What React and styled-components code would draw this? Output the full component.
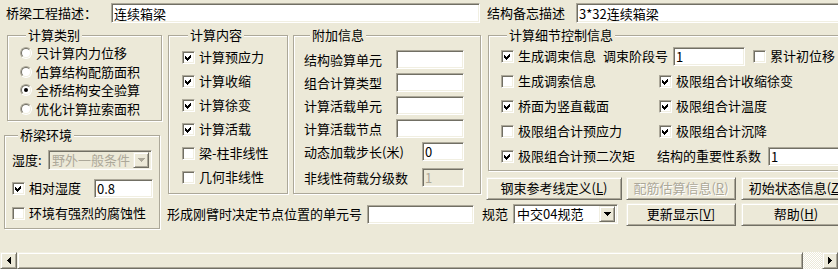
import React from 'react'
import styled, { createGlobalStyle, css } from 'styled-components'

const GlobalStyle = createGlobalStyle`
  html, body {
    margin: 0;
    padding: 0;
    background: #ece9d8;
  }
`

const sunken = css`
  box-sizing: border-box;
  border: 1px solid;
  border-color: #aca899 #fff #fff #aca899;
  box-shadow: inset 1px 1px 0 #716f64, inset -1px -1px 0 #f1efe2;
`

const raised = css`
  box-sizing: border-box;
  border: 1px solid;
  border-color: #f1efe2 #716f64 #716f64 #f1efe2;
  box-shadow: inset 1px 1px 0 #fff, inset -1px -1px 0 #aca899;
`

const Window = styled.div`
  width: 838px;
  height: 269px;
  overflow: hidden;
  background: #ece9d8;
  display: flex;
  flex-direction: column;
  font-family: "Noto Sans CJK SC", "Noto Sans", sans-serif;
  font-size: 13px;
  line-height: 16px;
  color: #000;
`

const TopRow = styled.div`
  display: flex;
  align-items: center;
  height: 20px;
  padding: 3px 0 0 6px;
  flex: none;
`

const Label = styled.span`
  flex: none;
  white-space: nowrap;
  width: ${p => (p.$w ? `${p.$w}px` : 'auto')};
  margin-left: ${p => p.$ml || 0}px;
  color: ${p => (p.$disabled ? '#aca899' : '#000')};
`

const TextBox = styled.input`
  ${sunken}
  flex: none;
  width: ${p => p.$w}px;
  height: ${p => p.$h || 19}px;
  margin: 0 0 0 ${p => p.$ml || 0}px;
  padding: 0 2px;
  font: inherit;
  color: #000;
  background: #fff;
  outline: none;
  &:disabled {
    background: #ece9d8;
    color: #aca899;
  }
`

const Main = styled.div`
  display: flex;
  flex: none;
`

const LeftCol = styled.div`
  width: 163px;
  flex: none;
  display: flex;
  flex-direction: column;
  align-items: flex-start;
`

const RightArea = styled.div`
  display: flex;
  flex-direction: column;
  flex: none;
`

const TopGroups = styled.div`
  display: flex;
  align-items: flex-start;
`

const Group = styled.fieldset`
  box-sizing: border-box;
  flex: none;
  width: ${p => p.$w}px;
  margin: ${p => p.$mt || 0}px 0 0 ${p => p.$ml || 0}px;
  padding: ${p => p.$pad || '0'};
  min-width: 0;
  border: 1px solid #aca899;
  box-shadow: inset 1px 1px 0 #fff, 1px 1px 0 #fff;
`

const Legend = styled.legend`
  padding: 0 2px;
  margin-left: 6px;
  line-height: 14px;
  background: #ece9d8;
`

const Row = styled.div`
  display: flex;
  align-items: center;
  justify-content: ${p => (p.$spread ? 'space-between' : 'flex-start')};
  height: ${p => p.$h || 24}px;
  margin-top: ${p => p.$mt || 0}px;
  white-space: nowrap;
`

const Cell = styled.div`
  width: ${p => p.$w}px;
  flex: none;
  display: flex;
  align-items: center;
`

const CheckLabel = styled.label`
  display: flex;
  align-items: center;
  gap: 4px;
  flex: none;
  white-space: nowrap;
  margin-left: ${p => p.$ml || 0}px;
`

const CheckBox = styled.span`
  ${sunken}
  width: 13px;
  height: 13px;
  background: #fff;
  flex: none;
  display: inline-flex;
  align-items: center;
  justify-content: center;
`

const RadioOuter = styled.span`
  box-sizing: border-box;
  width: 12px;
  height: 12px;
  border-radius: 50%;
  border: 1px solid;
  border-color: #aca899 #fff #fff #aca899;
  display: inline-flex;
  flex: none;
`

const RadioInner = styled.span`
  flex: 1;
  border-radius: 50%;
  border: 1px solid;
  border-color: #716f64 #f1efe2 #f1efe2 #716f64;
  background: #fff;
  display: flex;
  align-items: center;
  justify-content: center;
`

const Dot = styled.span`
  width: 4px;
  height: 4px;
  border-radius: 50%;
  background: #000;
`

const Combo = styled.div`
  ${sunken}
  display: flex;
  align-items: center;
  flex: none;
  width: ${p => p.$w}px;
  height: 20px;
  margin-left: ${p => p.$ml || 0}px;
  padding: 0 2px 0 3px;
  background: ${p => (p.$disabled ? '#ece9d8' : '#fff')};
  color: ${p => (p.$disabled ? '#aca899' : '#000')};
`

const ComboText = styled.span`
  flex: 1;
  white-space: nowrap;
`

const DropBtn = styled.span`
  ${raised}
  width: 16px;
  height: 16px;
  flex: none;
  background: #ece9d8;
  display: flex;
  align-items: center;
  justify-content: center;
`

const Button = styled.button`
  ${raised}
  flex: none;
  width: ${p => p.$w}px;
  height: 23px;
  margin: 0 0 0 ${p => p.$ml || 0}px;
  padding: 0;
  background: #ece9d8;
  font: inherit;
  color: #000;
  white-space: nowrap;
  &:disabled {
    color: #aca899;
    text-shadow: 1px 1px 0 #fff;
  }
`

const DetailCol = styled.div`
  display: flex;
  flex-direction: column;
  align-items: flex-start;
  margin-left: 5px;
`

const ButtonRow = styled.div`
  display: flex;
  margin-top: 6px;
`

const BottomRow = styled.div`
  display: flex;
  align-items: center;
  height: 23px;
  margin-top: 3px;
`

const ScrollBar = styled.div`
  display: flex;
  height: 17px;
  margin-top: auto;
  flex: none;
`

const ArrowBtn = styled.div`
  ${raised}
  width: ${p => p.$w}px;
  height: 17px;
  flex: none;
  background: #ece9d8;
  display: flex;
  align-items: center;
  justify-content: center;
`

const Thumb = styled.div`
  ${raised}
  width: ${p => p.$w}px;
  height: 17px;
  flex: none;
  background: #ece9d8;
`

const Track = styled.div`
  flex: 1;
  background: repeating-conic-gradient(#fff 0 25%, #ece9d8 0 50%) 0 0 / 2px 2px;
`

const DownArrow = ({ color = '#000' }) => (
  <svg width="7" height="4" viewBox="0 0 7 4" shapeRendering="crispEdges">
    <path d="M0 0h7v1H0zM1 1h5v1H1zM2 2h3v1H2zM3 3h1v1H3z" fill={color} />
  </svg>
)

const SideArrow = ({ dir }) => (
  <svg width="4" height="7" viewBox="0 0 4 7" shapeRendering="crispEdges"
    style={{ transform: dir === 'right' ? 'scaleX(-1)' : 'none' }}>
    <path d="M0 3h1v1H0zM1 2h1v3H1zM2 1h1v5H2zM3 0h1v7H3z" fill="#000" />
  </svg>
)

const Check = ({ checked, children, ml }) => (
  <CheckLabel $ml={ml}>
    <CheckBox>
      {checked && (
        <svg width="7" height="7" viewBox="0 0 7 7" shapeRendering="crispEdges">
          <polygon points="0,2 2,4 6,0 6,3 2,7 0,5" fill="#000" />
        </svg>
      )}
    </CheckBox>
    <span>{children}</span>
  </CheckLabel>
)

const Radio = ({ checked, children }) => (
  <CheckLabel>
    <RadioOuter>
      <RadioInner>{checked && <Dot />}</RadioInner>
    </RadioOuter>
    <span>{children}</span>
  </CheckLabel>
)

const calcTypes = ['只计算内力位移', '估算结构配筋面积', '全桥结构安全验算', '优化计算拉索面积']

const calcContent = [
  ['计算预应力', true],
  ['计算收缩', true],
  ['计算徐变', true],
  ['计算活载', true],
  ['梁-柱非线性', false],
  ['几何非线性', false],
]

const extraInfo = ['结构验算单元', '组合计算类型', '计算活载单元', '计算活载节点']

const App = () => {
  return (
    <>
      <GlobalStyle />
      <Window>
        <TopRow>
          <Label $w={105}>桥梁工程描述：</Label>
          <TextBox $w={369} $h={20} value="连续箱梁" readOnly />
          <Label $w={89} $ml={7}>结构备忘描述</Label>
          <TextBox $w={300} $h={20} value="3*32连续箱梁" readOnly />
        </TopRow>

        <Main>
          <LeftCol>
            <Group $w={155} $ml={7} $mt={5} $pad="2px 0 2px 12px">
              <Legend>计算类别</Legend>
              {calcTypes.map((t, i) => (
                <Row key={t} $h={18.5}>
                  <Radio checked={i === 2}>{t}</Radio>
                </Row>
              ))}
            </Group>

            <Group $w={156} $ml={4} $mt={7} $pad="8px 0 6px 7px">
              <Legend>桥梁环境</Legend>
              <Row $h={20}>
                <Label $w={36}>湿度:</Label>
                <Combo $w={104} $disabled>
                  <ComboText>野外一般条件</ComboText>
                  <DropBtn><DownArrow color="#aca899" /></DropBtn>
                </Combo>
              </Row>
              <Row $h={20} $mt={8}>
                <Cell $w={82}>
                  <Check checked>相对湿度</Check>
                </Cell>
                <TextBox $w={59} value="0.8" readOnly />
              </Row>
              <Row $h={18} $mt={6}>
                <Check>环境有强烈的腐蚀性</Check>
              </Row>
            </Group>
          </LeftCol>

          <RightArea>
            <TopGroups>
              <Group $w={120} $ml={5} $mt={5} $pad="3px 0 4px 13px">
                <Legend>计算内容</Legend>
                {calcContent.map(([t, c]) => (
                  <Row key={t}>
                    <Check checked={c}>{t}</Check>
                  </Row>
                ))}
              </Group>

              <Group $w={188} $ml={5} $mt={5} $pad="6px 16px 4px 10px">
                <Legend>附加信息</Legend>
                {extraInfo.map(t => (
                  <Row key={t} $h={23} $spread>
                    <Label>{t}</Label>
                    <TextBox $w={68} readOnly />
                  </Row>
                ))}
                <Row $h={23} $spread>
                  <Label>动态加载步长(米)</Label>
                  <TextBox $w={42} value="0" readOnly />
                </Row>
                <Row $h={23} $mt={3} $spread>
                  <Label>非线性荷载分级数</Label>
                  <TextBox $w={42} value="1" disabled />
                </Row>
              </Group>

              <DetailCol>
                <Group $w={400} $ml={2} $mt={5} $pad="1.5px 0 1px 12px">
                  <Legend>计算细节控制信息</Legend>
                  <Row $h={25}>
                    <Check checked>生成调束信息</Check>
                    <Label $ml={7}>调束阶段号</Label>
                    <TextBox $w={72} $ml={5} value="1" readOnly />
                    <Check ml={8}>累计初位移</Check>
                  </Row>
                  <Row $h={25}>
                    <Cell $w={158}><Check>生成调索信息</Check></Cell>
                    <Check checked>极限组合计收缩徐变</Check>
                  </Row>
                  <Row $h={25}>
                    <Cell $w={158}><Check checked>桥面为竖直截面</Check></Cell>
                    <Check checked>极限组合计温度</Check>
                  </Row>
                  <Row $h={25}>
                    <Cell $w={158}><Check>极限组合计预应力</Check></Cell>
                    <Check checked>极限组合计沉降</Check>
                  </Row>
                  <Row $h={25}>
                    <Cell $w={156}><Check checked>极限组合计预二次矩</Check></Cell>
                    <Label $w={104}>结构的重要性系数</Label>
                    <TextBox $w={80} $ml={7} value="1" readOnly />
                  </Row>
                </Group>
                <ButtonRow>
                  <Button $w={136}>钢束参考线定义(<u>L</u>)</Button>
                  <Button $w={110} $ml={4} disabled>配筋估算信息(<u>R</u>)</Button>
                  <Button $w={110} $ml={5}>初始状态信息(<u>Z</u>)</Button>
                </ButtonRow>
              </DetailCol>
            </TopGroups>

            <BottomRow>
              <Label $w={195} $ml={4}>形成刚臂时决定节点位置的单元号</Label>
              <TextBox $w={107} $ml={5} readOnly />
              <Label $w={26} $ml={8}>规范</Label>
              <Combo $w={105} $ml={5}>
                <ComboText>中交04规范</ComboText>
                <DropBtn><DownArrow /></DropBtn>
              </Combo>
              <Button $w={110} $ml={8}>更新显示[<u>V</u>]</Button>
              <Button $w={110} $ml={5}>帮助(<u>H</u>)</Button>
            </BottomRow>
          </RightArea>
        </Main>

        <ScrollBar>
          <ArrowBtn $w={17}><SideArrow dir="left" /></ArrowBtn>
          <Thumb $w={786} />
          <Track />
          <ArrowBtn $w={16}><SideArrow dir="right" /></ArrowBtn>
        </ScrollBar>
      </Window>
    </>
  )
}

export default App
